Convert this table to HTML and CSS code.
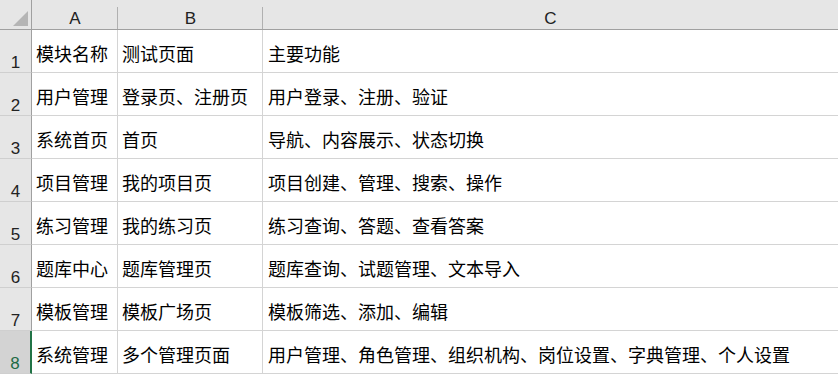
FILE: index.html
```html
<!DOCTYPE html>
<html lang="zh-CN">
<head>
<meta charset="utf-8">
<title>Sheet</title>
<link rel="stylesheet" href="styles.css">
</head>
<body>
<div class="sheet">
  <div class="corner"><svg class="corner-tri" width="16" height="16" viewBox="0 0 16 16"><polygon points="0,15 15,15 15,0" fill="#b5b5b5"/></svg></div>
  <div class="colhead">A</div>
  <div class="colhead">B</div>
  <div class="colhead last">C</div>

  <div class="rowhead">1</div>
  <div class="cell">模块名称</div>
  <div class="cell">测试页面</div>
  <div class="cell c">主要功能</div>

  <div class="rowhead">2</div>
  <div class="cell">用户管理</div>
  <div class="cell">登录页、注册页</div>
  <div class="cell c">用户登录、注册、验证</div>

  <div class="rowhead">3</div>
  <div class="cell">系统首页</div>
  <div class="cell">首页</div>
  <div class="cell c">导航、内容展示、状态切换</div>

  <div class="rowhead">4</div>
  <div class="cell">项目管理</div>
  <div class="cell">我的项目页</div>
  <div class="cell c">项目创建、管理、搜索、操作</div>

  <div class="rowhead">5</div>
  <div class="cell">练习管理</div>
  <div class="cell">我的练习页</div>
  <div class="cell c">练习查询、答题、查看答案</div>

  <div class="rowhead">6</div>
  <div class="cell">题库中心</div>
  <div class="cell">题库管理页</div>
  <div class="cell c">题库查询、试题管理、文本导入</div>

  <div class="rowhead">7</div>
  <div class="cell">模板管理</div>
  <div class="cell">模板广场页</div>
  <div class="cell c">模板筛选、添加、编辑</div>

  <div class="rowhead selected">8</div>
  <div class="cell">系统管理</div>
  <div class="cell">多个管理页面</div>
  <div class="cell c">用户管理、角色管理、组织机构、岗位设置、字典管理、个人设置</div>
</div>
</body>
</html>
```

FILE: styles.css
```css
html, body {
  margin: 0;
  padding: 0;
  background: #ffffff;
  overflow: hidden;
}

.sheet {
  display: grid;
  grid-template-columns: 32px 86px 145px 1fr;
  grid-template-rows: 30px repeat(8, 43px);
  width: 838px;
}

.corner,
.colhead,
.rowhead {
  background: #e6e6e6;
  box-sizing: border-box;
  font-family: "Liberation Sans", Arial, sans-serif;
  font-size: 17px;
  line-height: 19px;
  color: #222222;
}

.corner {
  position: relative;
  border-right: 1px solid #a0a0a0;
  border-bottom: 1px solid #a0a0a0;
}

.corner-tri {
  position: absolute;
  left: 13px;
  top: 11px;
}

.colhead {
  position: relative;
  border-bottom: 1px solid #a0a0a0;
  display: flex;
  align-items: flex-end;
  justify-content: center;
  padding-bottom: 1px;
}

.colhead::after {
  content: "";
  position: absolute;
  right: 0;
  top: 7px;
  bottom: 0;
  width: 1px;
  background: #b0b0b0;
}

.colhead.last::after {
  display: none;
}

.rowhead {
  border-right: 1px solid #a0a0a0;
  border-bottom: 1px solid #cfcfcf;
  display: flex;
  align-items: flex-end;
  justify-content: center;
}

.rowhead.selected {
  background: #d3d3d3;
  color: #1e6b45;
  border-right: 2px solid #217346;
}

.cell {
  box-sizing: border-box;
  border-right: 1px solid #d4d4d4;
  border-bottom: 1px solid #d4d4d4;
  display: flex;
  align-items: flex-end;
  padding: 0 0 6px 4px;
  font-family: "Noto Sans CJK SC", "Noto Sans", sans-serif;
  font-size: 18px;
  line-height: 26px;
  color: #000000;
  white-space: nowrap;
}

.cell.c {
  border-right: none;
  padding-left: 5px;
}
```
